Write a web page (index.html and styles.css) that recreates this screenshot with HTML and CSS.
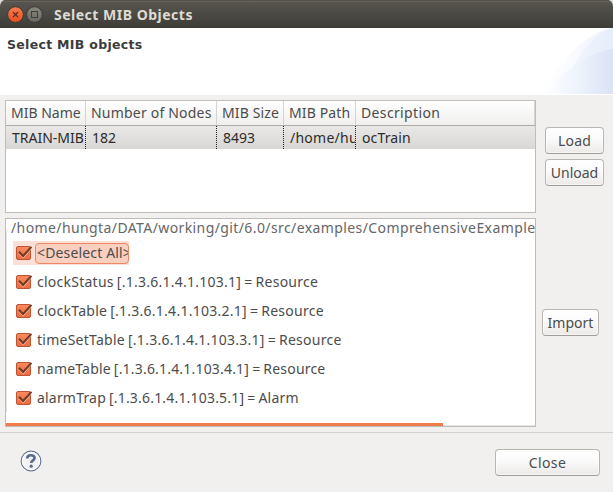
FILE: index.html
```
<!DOCTYPE html>
<html lang="en">
<head>
<meta charset="utf-8">
<title>Select MIB Objects</title>
<link rel="stylesheet" href="styles.css">
</head>
<body>
<svg class="defs" width="0" height="0" aria-hidden="true">
  <defs>
    <linearGradient id="box" x1="0" y1="0" x2="0" y2="1"><stop offset="0" stop-color="#fb8a5c"/><stop offset="1" stop-color="#ea6c40"/></linearGradient>
    <symbol id="check" viewBox="0 0 17 16">
      <rect x="1.5" y="1.5" width="14" height="13" rx="1.5" fill="url(#box)" stroke="#bd5535"/>
      <path d="M4.2 7.4L8.1 11.8L16 2.6" fill="none" stroke="#ffb493" stroke-width="1" transform="translate(0 1.4)"/>
      <path d="M4 6.8L8 11L16.4 1.8" fill="none" stroke="#6d3c2c" stroke-width="2"/>
    </symbol>
  </defs>
</svg>
<div class="window">
  <header class="titlebar">
    <svg class="controls" width="38" height="18" viewBox="0 0 38 18">
      <defs>
        <linearGradient id="red" x1="0" y1="0" x2="0" y2="1"><stop offset="0" stop-color="#f67c54"/><stop offset="1" stop-color="#e4501f"/></linearGradient>
        <linearGradient id="gray" x1="0" y1="0" x2="0" y2="1"><stop offset="0" stop-color="#8b897f"/><stop offset="1" stop-color="#68675f"/></linearGradient>
      </defs>
      <circle cx="9.5" cy="8.6" r="7.9" fill="url(#red)" stroke="#3a3833"/>
      <path d="M7 6.1L12 11.1M12 6.1L7 11.1" stroke="#51291c" stroke-width="1.3"/>
      <circle cx="28.5" cy="8.6" r="7.9" fill="url(#gray)" stroke="#3a3833"/>
      <rect x="25.5" y="5.5" width="6" height="6" fill="none" stroke="#3f3e39"/>
    </svg>
    <span class="title">Select MIB Objects</span>
  </header>
  <section class="banner">
    <h1>Select MIB objects</h1>
    <svg class="swoosh" width="73" height="66" viewBox="0 0 73 66">
      <defs>
        <linearGradient id="s1" x1="0" x2="1"><stop offset="0" stop-color="#fff"/><stop offset=".5" stop-color="#f8fafe"/><stop offset="1" stop-color="#eaf0fc"/></linearGradient>
        <linearGradient id="s2" x1="0" x2="1"><stop offset="0" stop-color="#fff"/><stop offset=".5" stop-color="#eef3fc"/><stop offset="1" stop-color="#dae2f6"/></linearGradient>
      </defs>
      <path d="M0 66C18 38 42 5 73 0V66Z" fill="url(#s1)"/>
      <path d="M23 66C29 40 50 6 73 0V66Z" fill="#dfe8fa" opacity=".35"/>
      <path d="M2 66C28 40 50 24 73 21V66Z" fill="url(#s2)"/>
    </svg>
  </section>
  <main class="content">
    <div class="panels">
      <div class="table">
        <div class="row head">
          <span class="cell">MIB Name</span>
          <span class="cell nodes">Number of Nodes</span>
          <span class="cell size">MIB Size</span>
          <span class="cell size">MIB Path</span>
          <span class="cell description">Description</span>
        </div>
        <div class="row data">
          <span class="cell">TRAIN-MIB</span>
          <span class="cell">182</span>
          <span class="cell">8493</span>
          <span class="cell file">/home/hu</span>
          <span class="cell size">ocTrain</span>
        </div>
      </div>
      <div class="tree">
        <div class="path">/home/hungta/DATA/working/git/6.0/src/examples/ComprehensiveExample</div>
        <div class="items">
          <div class="item selected"><svg class="check"><use href="#check"/></svg><span class="chip">&lt;Deselect All&gt;</span></div>
          <div class="item"><svg class="check"><use href="#check"/></svg>clockStatus [.1.3.6.1.4.1.103.1] = Resource</div>
          <div class="item"><svg class="check"><use href="#check"/></svg>clockTable [.1.3.6.1.4.1.103.2.1] = Resource</div>
          <div class="item"><svg class="check"><use href="#check"/></svg>timeSetTable [.1.3.6.1.4.1.103.3.1] = Resource</div>
          <div class="item tight"><svg class="check"><use href="#check"/></svg>nameTable [.1.3.6.1.4.1.103.4.1] = Resource</div>
          <div class="item tight"><svg class="check"><use href="#check"/></svg>alarmTrap [.1.3.6.1.4.1.103.5.1] = Alarm</div>
        </div>
        <div class="scroll"><div class="thumb"></div></div>
      </div>
    </div>
    <div class="actions">
      <button class="btn load">Load</button>
      <button class="btn unload">Unload</button>
      <button class="btn import">Import</button>
    </div>
  </main>
  <footer class="footer">
    <svg class="help" width="22" height="22" viewBox="0 0 22 22">
      <circle cx="11" cy="11" r="9.8" fill="#f3f3f3" stroke="#5d6d8d" stroke-width="1.2"/>
      <circle cx="11" cy="11" r="8.8" fill="none" stroke="#fff"/>
      <path d="M7.2 8.5C7.2 4.2 14.6 4.4 14.6 8C14.6 10.4 11.2 10.4 11.2 13" fill="none" stroke="#5a6a8f" stroke-width="2.6"/>
      <circle cx="11.2" cy="16.2" r="1.6" fill="#5a6a8f"/>
    </svg>
    <button class="btn close">Close</button>
  </footer>
</div>
</body>
</html>
```
FILE: styles.css
```
* { box-sizing: border-box; }
body { margin: 0; background: #dedcda; }
.defs { display: block; height: 0; }
.window {
  width: 613px; height: 492px; display: flex; flex-direction: column;
  background: #f1f0ee; border-radius: 6px 6px 0 0; overflow: hidden;
  font: 14px/20px "Noto Sans", sans-serif; color: #4c4c4c; white-space: nowrap;
}
.titlebar {
  height: 28px; flex: none; display: flex; align-items: center; padding: 1px 0 0 6px; gap: 10px;
  background: linear-gradient(#595750, #3d3c37); box-shadow: inset 0 1px #53514a, inset 0 2px #66645b;
}
.title { font-weight: 700; color: #dfdbd2; letter-spacing: .5px; }
.banner { height: 67px; flex: none; display: flex; justify-content: space-between; background: #fff; }
h1 { margin: 8px 0 0 7px; font: bold 12.5px/17px "DejaVu Sans", sans-serif; letter-spacing: .3px; color: #3c3c3c; }
.content { height: 338px; flex: none; display: flex; padding: 5px 0 0 5px; border-bottom: 1px solid #d4d2d0; }
.panels { width: 531px; display: flex; flex-direction: column; gap: 5px; }
.table { height: 113px; border: 1px solid #bfbdba; background: #fff; }
.row { display: grid; grid-template-columns: 80px 131px 67px 72px 1fr; }
.head { height: 25px; background: linear-gradient(#fff, #f0efee); border-bottom: 1px solid #aeaba7; }
.data { height: 23px; background: linear-gradient(#e9e8e6, #d9d7d5); color: #2c2c2c; }
.cell { overflow: hidden; padding-left: 5px; line-height: 24px; border-right: 1px solid #d6d4d2; }
.nodes { letter-spacing: .2px; }
.size { letter-spacing: .13px; }
.file { letter-spacing: .25px; }
.description { letter-spacing: .36px; }
.data .cell { padding-left: 6px; line-height: 23px; border-right: 1px dotted #222; }
.data .cell:last-child { border: 0; }
.tree { height: 209px; border: 1px solid #bfbdba; background: #fff; overflow: hidden; display: flex; flex-direction: column; }
.path { height: 19px; padding-left: 5px; line-height: 18px; letter-spacing: .4px; color: #666; }
.items { margin-top: -9px; padding-top: 9px; border-left: 1px solid #e3e1df; border-top-left-radius: 4px; }
.item { height: 29px; display: flex; align-items: center; padding-left: 8px; gap: 5px; letter-spacing: .25px; word-spacing: -.8px; }
.tight { letter-spacing: .19px; }
.selected { width: 116px; height: 24px; margin: 3px 0 2px 6px; padding-left: 2px; gap: 3px; background: #fbe0d7; }
.check { width: 17px; height: 16px; flex: none; }
.chip { width: 94px; height: 21px; border: 1px solid #f08763; border-radius: 4px; background: #f9cfbf; padding-left: 1px; line-height: 18px; overflow: hidden; letter-spacing: .15px; word-spacing: 0; }
.scroll { margin-top: auto; height: 3px; background: linear-gradient(#fff 66%, #e6e5e3 66%); }
.thumb { width: 437px; height: 3px; background: #ef7a4c; }
.actions { display: flex; flex-direction: column; padding-left: 6px; }
.btn {
  height: 27px; padding: 0; border: 1px solid #b9b6b2; border-bottom-color: #a19e9a; border-radius: 4px;
  background: linear-gradient(#fff, #fbfbfb 40%, #eceae8); box-shadow: inset 0 0 0 1px #fff8;
  font: inherit; color: #4c4c4c; line-height: 24px; letter-spacing: .2px;
}
.load { width: 59px; margin: 27px 0 5px 3px; }
.unload { width: 59px; margin-left: 3px; letter-spacing: 0; }
.import { width: 57px; margin-top: 123px; letter-spacing: 0; }
.footer { flex: 1; display: flex; justify-content: space-between; align-items: flex-start; padding: 16px 13px 0 20px; }
.help { margin-top: 1px; }
.close { width: 105px; letter-spacing: .4px; }
```
